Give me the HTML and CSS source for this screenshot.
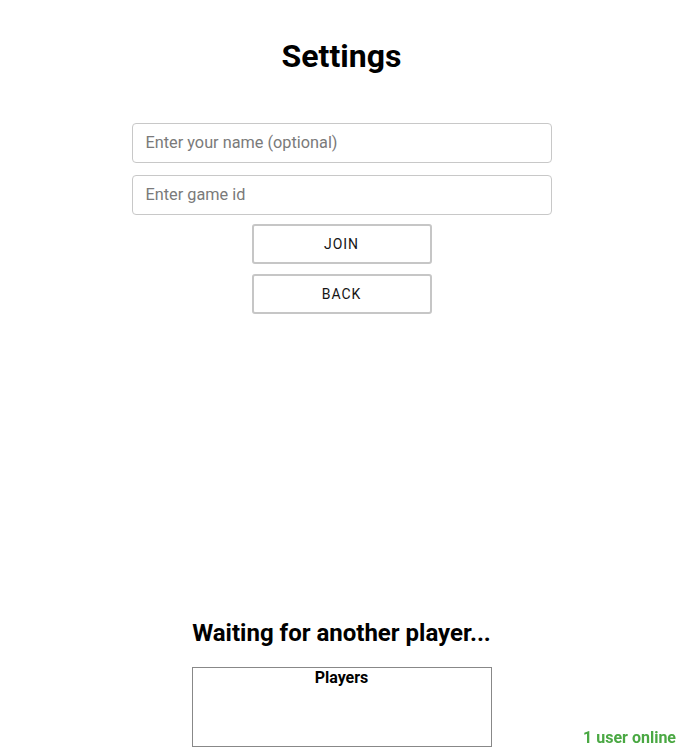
FILE: index.html
```html
<!DOCTYPE html>
<html lang="en">
<head>
<meta charset="utf-8">
<title>Settings</title>
<link rel="stylesheet" href="styles.css">
</head>
<body>
<main class="page">
  <section class="settings">
    <h1 class="title">Settings</h1>
    <form class="form">
      <input class="field" type="text" placeholder="Enter your name (optional)">
      <input class="field" type="text" placeholder="Enter game id">
      <button class="btn" type="button">JOIN</button>
      <button class="btn" type="button">BACK</button>
    </form>
  </section>
  <section class="waiting">
    <h2 class="waiting-title">Waiting for another player...</h2>
    <div class="players">
      <div class="players-title">Players</div>
    </div>
  </section>
</main>
<div class="online">1 user online</div>
</body>
</html>
```
FILE: styles.css
```css
* { box-sizing: border-box; }
html, body { margin: 0; padding: 0; background: #fff; }
body {
  font-family: Roboto, "Noto Sans", Arial, sans-serif;
  color: #000;
  width: 680px;
  height: 751px;
  overflow: hidden;
}
.page {
  display: flex;
  flex-direction: column;
  align-items: center;
  padding-left: 3px;
}
.settings {
  display: flex;
  flex-direction: column;
  align-items: center;
}
.title {
  font-size: 32px;
  font-weight: 700;
  margin: 38px 0 0;
  line-height: 37px;
}
.form {
  margin-top: 48px;
  display: flex;
  flex-direction: column;
  align-items: center;
  width: 420px;
}
.field {
  width: 420px;
  height: 40px;
  border: 1px solid #c8c8c8;
  border-radius: 4px;
  padding: 0 13px 1px;
  font-family: inherit;
  font-size: 16.3px;
  color: #222;
  margin-bottom: 12px;
  outline: none;
}
.field::placeholder { color: #7a7a7a; }
.field + .field { margin-bottom: 9px; }
.btn {
  width: 180px;
  height: 40px;
  background: #fff;
  border: 2px solid #c6c6c6;
  border-radius: 3px;
  font-family: inherit;
  font-size: 14px;
  font-weight: 400;
  letter-spacing: 0.9px;
  color: #151515;
  margin-bottom: 10px;
  cursor: pointer;
}
.waiting {
  margin-top: 295px;
  display: flex;
  flex-direction: column;
  align-items: center;
}
.waiting-title {
  font-size: 24px;
  font-weight: 700;
  margin: 0;
  line-height: 28px;
}
.players {
  margin-top: 20px;
  width: 300px;
  height: 80px;
  border: 1px solid #888;
  text-align: center;
}
.players-title {
  font-size: 16px;
  font-weight: 700;
  line-height: 19px;
}
.online {
  position: fixed;
  right: 4px;
  bottom: 4px;
  color: #4aa843;
  font-size: 16px;
  font-weight: 700;
  line-height: 19px;
}
```
